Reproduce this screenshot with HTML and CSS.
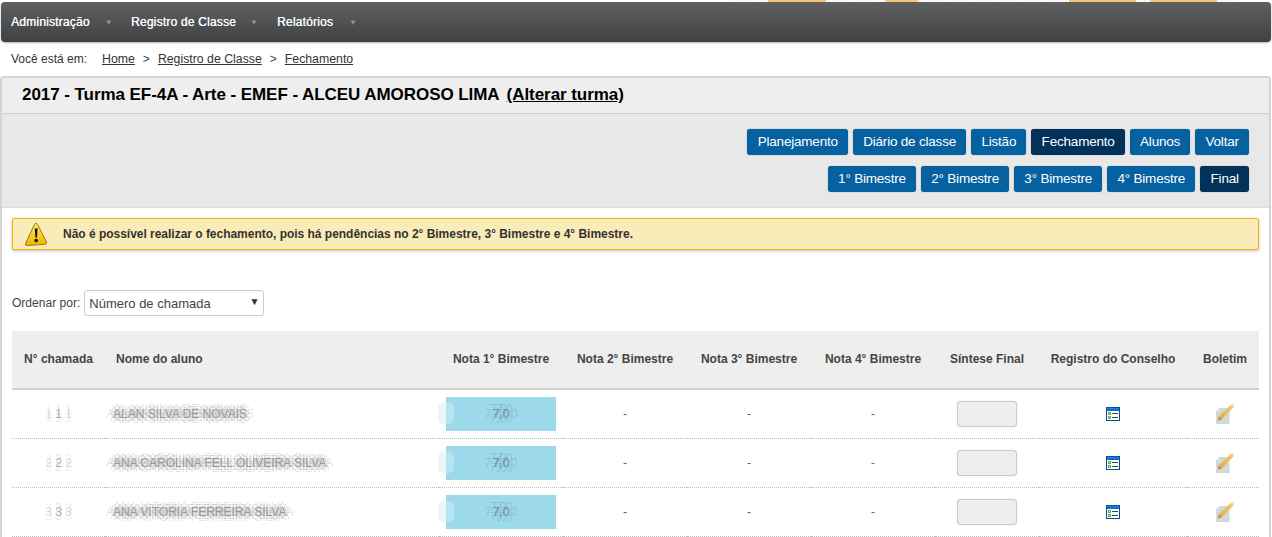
FILE: index.html
```html
<!DOCTYPE html>
<html lang="pt-BR">
<head>
<meta charset="utf-8">
<title>Fechamento</title>
<link rel="stylesheet" href="styles.css">
</head>
<body>
<svg class="defs" width="0" height="0" aria-hidden="true">
  <defs>
    <linearGradient id="tb" x1="0" y1="0" x2="0" y2="1"><stop offset="0" stop-color="#1d8ae8"/><stop offset="1" stop-color="#0a5fc0"/></linearGradient>
    <linearGradient id="pen" x1="0" y1="1" x2="1" y2="0"><stop offset="0" stop-color="#e0a83c"/><stop offset="1" stop-color="#f3cf7e"/></linearGradient>
    <linearGradient id="tri" x1="0" y1="0" x2="0" y2="1"><stop offset="0" stop-color="#ffe95c"/><stop offset="1" stop-color="#f0b400"/></linearGradient>
    <symbol id="i-list" viewBox="0 0 14 14">
      <rect x="0.5" y="0.5" width="13" height="13" fill="#fff" stroke="#0b4a96"/>
      <rect x="1" y="1" width="12" height="3" fill="url(#tb)"/>
      <rect x="2" y="5" width="3" height="3" fill="#58ad5c"/>
      <rect x="2" y="9" width="3" height="3" fill="#58ad5c"/>
      <rect x="3" y="6" width="1" height="1" fill="#d8f0d8"/>
      <rect x="3" y="10" width="1" height="1" fill="#d8f0d8"/>
      <rect x="6" y="6" width="6" height="1" fill="#444"/>
      <rect x="6" y="10" width="6" height="1" fill="#444"/>
    </symbol>
    <symbol id="i-edit" viewBox="0 0 18 20">
      <path d="M0 7 L3 4 H13.5 V20 H0 Z" fill="#d2d9d9"/>
      <path d="M0 7 L3 4 V7 Z" fill="#eef1f1"/>
      <path d="M2 16.5 L2.8 12.5 L14.5 1 L17.8 0.3 L17.4 3.5 L5.8 15.5 Z" fill="url(#pen)"/>
      <path d="M2 16.5 L2.8 12.5 L5.8 15.5 Z" fill="#a89860"/>
      <path d="M14.5 1 L17.8 0.3 L17.4 3.5 Z" fill="#f6dfa8"/>
    </symbol>
  </defs>
</svg>

<div class="topstrip">
  <span class="chip chip-a"></span><span class="chip chip-b"></span><span class="chip chip-c"></span><span class="chip chip-d"></span>
</div>

<nav class="navbar">
  <a class="nav-item nav-w1">Administração<span class="caret">▼</span></a>
  <a class="nav-item nav-w2">Registro de Classe<span class="caret">▼</span></a>
  <a class="nav-item nav-w3">Relatórios<span class="caret">▼</span></a>
</nav>

<div class="crumbs">
  <span class="crumb-lead">Você está em:</span>
  <a class="crumb">Home</a><span class="sep">&gt;</span>
  <a class="crumb">Registro de Classe</a><span class="sep">&gt;</span>
  <a class="crumb">Fechamento</a>
</div>

<main class="panel">
  <h1 class="title">2017 - Turma EF-4A - Arte - EMEF - ALCEU AMOROSO LIMA <a class="change">(Alterar turma)</a></h1>

  <div class="toolbar">
    <div class="btn-row">
      <a class="btn">Planejamento</a>
      <a class="btn">Diário de classe</a>
      <a class="btn">Listão</a>
      <a class="btn btn-on">Fechamento</a>
      <a class="btn">Alunos</a>
      <a class="btn">Voltar</a>
    </div>
    <div class="btn-row">
      <a class="btn">1° Bimestre</a>
      <a class="btn">2° Bimestre</a>
      <a class="btn">3° Bimestre</a>
      <a class="btn">4° Bimestre</a>
      <a class="btn btn-on">Final</a>
    </div>
  </div>

  <div class="content">
    <div class="alert">
      <svg class="alert-icon" width="24" height="25" viewBox="0 0 24 25" aria-hidden="true">
        <path d="M12 1.5 Q13 1 13.6 2.5 L22.5 20 Q23 22 21 22.3 L3 23.5 Q1 23.5 1.5 21.5 L10.5 2.5 Q11 1.5 12 1.5 Z" fill="url(#tri)" stroke="#8f7a1a" stroke-width="1"/>
        <path d="M10.8 6.5 H13.6 L13 15.5 H11.4 Z" fill="#111"/>
        <circle cx="12.2" cy="18.5" r="1.8" fill="#111"/>
      </svg>
      <span>Não é possível realizar o fechamento, pois há pendências no 2° Bimestre, 3° Bimestre e 4° Bimestre.</span>
    </div>

    <div class="sort">
      <label class="sort-label" for="ordem">Ordenar por:</label>
      <div class="select-wrap">
        <select id="ordem" class="select"><option>Número de chamada</option></select>
      </div>
    </div>

    <table class="grid">
      <colgroup>
        <col class="c-num"><col class="c-name"><col class="c-nota"><col class="c-nota"><col class="c-nota"><col class="c-nota"><col class="c-sint"><col class="c-reg"><col class="c-bol">
      </colgroup>
      <thead>
        <tr>
          <th>N° chamada</th>
          <th class="th-name">Nome do aluno</th>
          <th>Nota 1° Bimestre</th>
          <th>Nota 2° Bimestre</th>
          <th>Nota 3° Bimestre</th>
          <th>Nota 4° Bimestre</th>
          <th>Síntese Final</th>
          <th>Registro do Conselho</th>
          <th class="th-bol">Boletim</th>
        </tr>
      </thead>
      <tbody>
        <tr>
          <td><span class="ghost-num">1</span></td>
          <td class="td-name"><span class="ghost-name">ALAN SILVA DE NOVAIS</span></td>
          <td><div class="nota"><span class="ghost-nota">7,0</span></div></td>
          <td class="dash">-</td><td class="dash">-</td><td class="dash dash-w">-</td>
          <td><div class="sint"></div></td>
          <td><svg class="ic-list" width="14" height="14"><use href="#i-list"/></svg></td>
          <td class="td-bol"><svg class="ic-edit" width="18" height="20"><use href="#i-edit"/></svg></td>
        </tr>
        <tr>
          <td><span class="ghost-num">2</span></td>
          <td class="td-name"><span class="ghost-name">ANA CAROLINA FELL OLIVEIRA SILVA</span></td>
          <td><div class="nota"><span class="ghost-nota">7,0</span></div></td>
          <td class="dash">-</td><td class="dash">-</td><td class="dash dash-w">-</td>
          <td><div class="sint"></div></td>
          <td><svg class="ic-list" width="14" height="14"><use href="#i-list"/></svg></td>
          <td class="td-bol"><svg class="ic-edit" width="18" height="20"><use href="#i-edit"/></svg></td>
        </tr>
        <tr>
          <td><span class="ghost-num">3</span></td>
          <td class="td-name"><span class="ghost-name">ANA VITORIA FERREIRA SILVA</span></td>
          <td><div class="nota"><span class="ghost-nota">7,0</span></div></td>
          <td class="dash">-</td><td class="dash">-</td><td class="dash dash-w">-</td>
          <td><div class="sint"></div></td>
          <td><svg class="ic-list" width="14" height="14"><use href="#i-list"/></svg></td>
          <td class="td-bol"><svg class="ic-edit" width="18" height="20"><use href="#i-edit"/></svg></td>
        </tr>
      </tbody>
    </table>
  </div>
</main>
</body>
</html>
```
FILE: styles.css
```css
html { overflow: hidden; }
body { margin: 0; background: #fff; font-family: "Liberation Sans", Arial, sans-serif; font-size: 12px; color: #333; }
.defs { position: absolute; }

.topstrip { height: 2px; display: flex; background: repeating-linear-gradient(90deg, #f6d6cc 0 1px, #fff 1px 3px) 730px 0 / 510px 1px no-repeat; }
.chip { height: 2px; background: #f9c877; }
.chip-a { width: 58px; margin-left: 768px; }
.chip-b { width: 33px; margin-left: 59px; }
.chip-c { width: 67px; margin-left: 151px; }
.chip-d { width: 67px; margin-left: 14px; }

.navbar { height: 40px; margin: 0 1px; display: flex; align-items: center; border-radius: 4px; background: linear-gradient(#5f6060, #3f4245); box-shadow: 0 1px 2px rgba(0,0,0,.3); }
.nav-item { display: flex; align-items: center; color: #fff; font-size: 12px; letter-spacing: .2px; text-shadow: .4px 0 0 rgba(255,255,255,.8); }
.nav-w1 { margin-left: 10px; width: 120px; }
.nav-w2 { width: 146px; }
.caret { font-size: 8px; color: #8f9192; letter-spacing: 0; text-shadow: none; }
.nav-w1 .caret { margin-left: 15px; }
.nav-w2 .caret { margin-left: 14px; }
.nav-w3 .caret { margin-left: 16px; }

.crumbs { height: 34px; display: flex; align-items: center; padding-left: 11px; color: #333; }
.crumb-lead { margin-right: 15px; }
.crumb { color: #333; font-size: 12.3px; text-decoration: underline; }
.sep { margin: 0 8px; color: #444; }

.panel { margin: 0 1px 0 0; border: 2px solid #d4d4d4; border-bottom: 0; border-radius: 4px 4px 0 0; padding-bottom: 60px; }
.title { margin: 0; height: 35px; line-height: 34px; padding-left: 20px; background: #eee; border-bottom: 1px solid #ccc; font-size: 17px; letter-spacing: -.06px; font-weight: bold; color: #000; box-sizing: content-box; }
.change { text-decoration: underline; margin-left: 3px; }

.toolbar { height: 94px; box-sizing: border-box; background: #e8e8e8; border-bottom: 1px solid #ddd; padding: 15px 20px 0 0; display: flex; flex-direction: column; gap: 11px; }
.btn-row { display: flex; justify-content: flex-end; gap: 5px; }
.btn { height: 26px; line-height: 26px; padding: 0 10.2px; box-sizing: border-box; background: #0561a0; color: #fff; font-size: 13.5px; letter-spacing: -.2px; border-radius: 3px; box-shadow: 0 0 1px rgba(0,0,0,.5); }
.btn-on { background: #02325a; }

.content { padding: 10px 10px 0 10px; }
.alert { height: 32px; box-sizing: border-box; display: flex; align-items: center; background: #faecb9; border: 1px solid #e8b90a; border-radius: 2px; box-shadow: 0 1px 3px rgba(0,0,0,.25); font-weight: bold; color: #333; font-size: 12px; letter-spacing: -.02px; padding-left: 11px; }
.alert-icon { margin-right: 15px; flex: none; }

.sort { margin-top: 40px; display: flex; align-items: center; gap: 4px; color: #444; }
.sort-label { font-size: 12px; letter-spacing: .02px; }
.select-wrap { position: relative; }
.select-wrap::after { content: "▼"; position: absolute; right: 5px; top: 6px; font-size: 10px; color: #333; pointer-events: none; }
.select { display: block; width: 180px; height: 26px; box-sizing: border-box; appearance: none; background: #fff; border: 1px solid #ccc; border-radius: 3px; padding: 0 4px; font-family: inherit; font-size: 13px; color: #444; }

.grid { margin-top: 15px; width: 1247px; table-layout: fixed; border-collapse: collapse; }
.c-num { width: 93px; }
.c-name { width: 334px; }
.c-nota { width: 124px; }
.c-sint { width: 104px; }
.c-reg { width: 148px; }
.c-bol { width: 72px; }
.grid th { height: 55px; padding: 0 0 2px; background: #eee; border-bottom: 2px solid #d0d0d0; font-size: 12px; font-weight: bold; color: #444; text-align: center; }
.grid th.th-name { text-align: left; padding-left: 11px; }
.grid th.th-bol, .grid td.td-bol { padding-left: 4px; }
.grid td { height: 48px; padding: 0; border-bottom: 1px dotted #bbb; text-align: center; vertical-align: middle; }
.grid td.td-name { text-align: left; padding-left: 8px; }

.ghost-num { color: #a4adb6; text-shadow: -10px 0 0 rgba(170,195,220,.5), 10px 0 0 rgba(180,180,180,.5), 0 -4px 0 rgba(190,190,190,.4), 0 4px 0 rgba(190,190,190,.4), -10px -4px 0 rgba(200,210,220,.3), 10px 4px 0 rgba(200,200,200,.3), -10px 4px 0 rgba(200,210,220,.3), 10px -4px 0 rgba(200,200,200,.3); }
.ghost-name { color: #999; text-shadow: -7px 0 0 rgba(195,195,195,.45), 7px 0 0 rgba(195,195,195,.45), 0 -5px 0 rgba(195,195,195,.45), 0 5px 0 rgba(195,195,195,.45), -3px -3px 0 rgba(205,185,185,.5), 3px 3px 0 rgba(185,185,205,.5), 3px -3px 0 rgba(205,195,185,.45), -3px 3px 0 rgba(185,195,205,.45); }

.nota { position: relative; width: 110px; height: 34px; margin: 0 auto; line-height: 34px; background: #9cd9ea; }
.nota::before { content: ""; position: absolute; left: -8px; top: 6px; width: 16px; height: 21px; border-radius: 5px; background: linear-gradient(90deg, #e8f6fb 50%, #b6e4f1 50%); }
.ghost-nota { color: #6f8f98; text-shadow: -8px 0 0 rgba(95,140,155,.3), 8px 0 0 rgba(95,140,155,.3), -3px -5px 0 rgba(95,140,155,.3), 3px -5px 0 rgba(95,140,155,.3), -3px 5px 0 rgba(95,140,155,.25), 3px 5px 0 rgba(95,140,155,.25); }

.dash { color: #1670b0; }
.dash-w { color: #9b5a20; }
.sint { width: 60px; height: 26px; margin: 0 auto; box-sizing: border-box; background: #eee; border: 1px solid #ccc; border-radius: 4px; box-shadow: 0 0 1px #bbb; }
.ic-list, .ic-edit { display: block; margin: 0 auto; }
```
